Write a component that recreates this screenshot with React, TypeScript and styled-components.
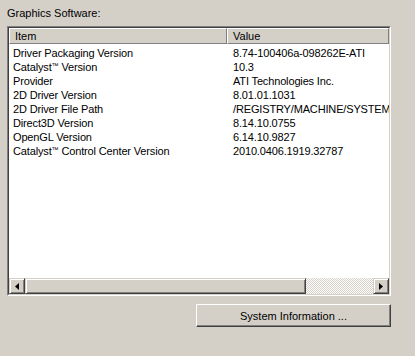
import styled, { createGlobalStyle } from 'styled-components';

const GlobalStyle = createGlobalStyle`
  html, body {
    margin: 0;
    padding: 0;
    background: #d4d0c8;
  }
  body {
    font-family: 'Liberation Sans', Arial, sans-serif;
    font-size: 11px;
    color: #000;
  }
`;

const Page = styled.div`
  width: 415px;
  height: 356px;
  box-sizing: border-box;
  padding: 7px 24px 0 7px;
  display: flex;
  flex-direction: column;
  background: #d4d0c8;
`;

const Title = styled.div`
  height: 19px;
  line-height: 13px;
  color: #000;
`;

const ListBox = styled.div`
  width: 384px;
  height: 270px;
  box-sizing: border-box;
  border-top: 1px solid #808080;
  border-left: 1px solid #808080;
  border-right: 1px solid #ffffff;
  border-bottom: 1px solid #ffffff;
  display: flex;
  flex-direction: column;
`;

const ListInner = styled.div`
  flex: 1;
  display: flex;
  flex-direction: column;
  border-top: 1px solid #404040;
  border-left: 1px solid #404040;
  border-right: 1px solid #d4d0c8;
  border-bottom: 1px solid #d4d0c8;
  background: #fff;
  min-height: 0;
`;

const Header = styled.div`
  display: flex;
  height: 16px;
  background: #d4d0c8;
  flex-shrink: 0;
`;

const HeaderCell = styled.div<{ $width?: number }>`
  ${p => (p.$width ? `width: ${p.$width}px;` : 'flex: 1;')}
  box-sizing: border-box;
  height: 16px;
  line-height: 15px;
  padding-left: 5px;
  border-top: 1px solid #fff;
  border-left: 1px solid #fff;
  border-right: 1px solid #808080;
  border-bottom: 1px solid #808080;
  white-space: nowrap;
  overflow: hidden;
`;

const Rows = styled.div`
  flex: 1;
  padding-top: 2px;
  overflow: hidden;
  letter-spacing: -0.15px;
`;

const Row = styled.div`
  display: flex;
  height: 14px;
  line-height: 14px;
`;

const Cell = styled.div<{ $width?: number }>`
  ${p => (p.$width ? `width: ${p.$width}px;` : 'flex: 1;')}
  padding-left: 4px;
  box-sizing: border-box;
  white-space: nowrap;
  overflow: hidden;
`;

const Tm = styled.span`
  font-size: 7px;
  line-height: 0;
  vertical-align: 3px;
  letter-spacing: 0;
`;

const ScrollBar = styled.div`
  display: flex;
  height: 16px;
  flex-shrink: 0;
  background-color: #fff;
  background-image: linear-gradient(45deg, #d4d0c8 25%, transparent 25%, transparent 75%, #d4d0c8 75%),
    linear-gradient(45deg, #d4d0c8 25%, transparent 25%, transparent 75%, #d4d0c8 75%);
  background-size: 2px 2px;
  background-position: 0 0, 1px 1px;
`;

const Raised = styled.div<{ $width?: number; $grow?: boolean }>`
  ${p => (p.$width ? `width: ${p.$width}px;` : '')}
  ${p => (p.$grow ? 'flex: 0 0 281px;' : '')}
  height: 16px;
  box-sizing: border-box;
  background: #d4d0c8;
  border-top: 1px solid #d4d0c8;
  border-left: 1px solid #d4d0c8;
  border-right: 1px solid #404040;
  border-bottom: 1px solid #404040;
  box-shadow: inset 1px 1px 0 #fff, inset -1px -1px 0 #808080;
  display: flex;
  align-items: center;
  justify-content: center;
`;

const Track = styled.div`
  flex: 1;
`;

const Footer = styled.div`
  display: flex;
  justify-content: flex-end;
  padding-top: 8px;
`;

const Button = styled.button`
  width: 195px;
  height: 23px;
  box-sizing: border-box;
  background: #d4d0c8;
  font-family: 'Liberation Sans', Arial, sans-serif;
  font-size: 11px;
  color: #000;
  padding: 0;
  border-top: 1px solid #fff;
  border-left: 1px solid #fff;
  border-right: 1px solid #404040;
  border-bottom: 1px solid #404040;
  box-shadow: inset -1px -1px 0 #808080;
`;

const Arrow = ({ dir }: { dir: 'left' | 'right' }) => (
  <svg width="4" height="7" viewBox="0 0 4 7">
    {dir === 'left' ? (
      <polygon points="4,0 4,7 0,3.5" fill="#000" />
    ) : (
      <polygon points="0,0 0,7 4,3.5" fill="#000" />
    )}
  </svg>
);

const rows: [React.ReactNode, string][] = [
  ['Driver Packaging Version', '8.74-100406a-098262E-ATI'],
  [<>Catalyst<Tm>™</Tm> Version</>, '10.3'],
  ['Provider', 'ATI Technologies Inc.'],
  ['2D Driver Version', '8.01.01.1031'],
  ['2D Driver File Path', '/REGISTRY/MACHINE/SYSTEM/ControlSet001'],
  ['Direct3D Version', '8.14.10.0755'],
  ['OpenGL Version', '6.14.10.9827'],
  [<>Catalyst<Tm>™</Tm> Control Center Version</>, '2010.0406.1919.32787'],
];

export default function App() {
  return (
    <>
      <GlobalStyle />
      <Page>
        <Title>Graphics Software:</Title>
        <ListBox>
          <ListInner>
            <Header>
              <HeaderCell $width={218}>Item</HeaderCell>
              <HeaderCell>Value</HeaderCell>
            </Header>
            <Rows>
              {rows.map(([k, v]) => (
                <Row key={v}>
                  <Cell $width={220}>{k}</Cell>
                  <Cell>{v}</Cell>
                </Row>
              ))}
            </Rows>
            <ScrollBar>
              <Raised $width={16}>
                <Arrow dir="left" />
              </Raised>
              <Raised $grow />
              <Track />
              <Raised $width={16}>
                <Arrow dir="right" />
              </Raised>
            </ScrollBar>
          </ListInner>
        </ListBox>
        <Footer>
          <Button>System Information ...</Button>
        </Footer>
      </Page>
    </>
  );
}
